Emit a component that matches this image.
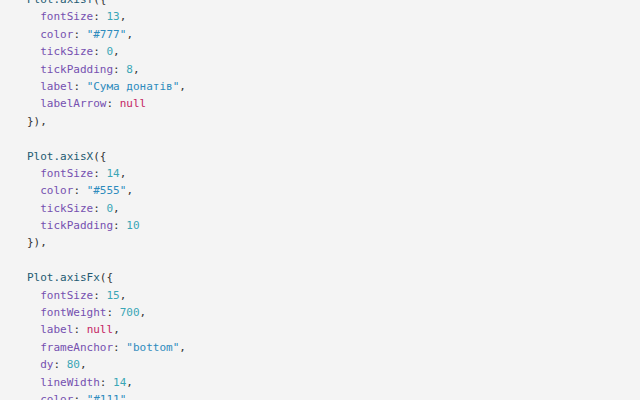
import React from 'react';

type Tok = [string, string];

const colors: Record<string, string> = {
  obj: 'text-[#235a72]',
  key: 'text-[#7450b0]',
  num: 'text-[#3aa6b6]',
  str: 'text-[#2d8bbd]',
  kw: 'text-[#c41f63]',
  p: 'text-[#333333]',
};

const prop = (key: string, type: string, value: string, comma = true): Tok[] => [
  ['p', '  '],
  ['key', key],
  ['p', ': '],
  [type, value],
  ...(comma ? ([['p', ',']] as Tok[]) : []),
];

const open = (name: string): Tok[] => [
  ['obj', 'Plot.' + name],
  ['p', '({'],
];

const close: Tok[] = [['p', '}),']];

const lines: Tok[][] = [
  open('axisY'),
  prop('fontSize', 'num', '13'),
  prop('color', 'str', '"#777"'),
  prop('tickSize', 'num', '0'),
  prop('tickPadding', 'num', '8'),
  prop('label', 'str', '"Сума донатів"'),
  prop('labelArrow', 'kw', 'null', false),
  close,
  [],
  open('axisX'),
  prop('fontSize', 'num', '14'),
  prop('color', 'str', '"#555"'),
  prop('tickSize', 'num', '0'),
  prop('tickPadding', 'num', '10', false),
  close,
  [],
  open('axisFx'),
  prop('fontSize', 'num', '15'),
  prop('fontWeight', 'num', '700'),
  prop('label', 'kw', 'null'),
  prop('frameAnchor', 'str', '"bottom"'),
  prop('dy', 'num', '80'),
  prop('lineWidth', 'num', '14'),
  prop('color', 'str', '"#111"'),
];

export default function App() {
  return (
    <div className="w-[640px] h-[400px] overflow-hidden bg-[#f4f4f4]">
      <pre className="mt-[-9px] pl-[27px] font-['DejaVu_Sans_Mono',monospace] text-[11px] leading-[17.4px] text-[#333333]">
        {lines.map((line, i) => (
          <div key={i} className="h-[17.4px] whitespace-pre">
            {line.map(([type, text], j) => (
              <span key={j} className={colors[type]}>
                {text}
              </span>
            ))}
          </div>
        ))}
      </pre>
    </div>
  );
}
